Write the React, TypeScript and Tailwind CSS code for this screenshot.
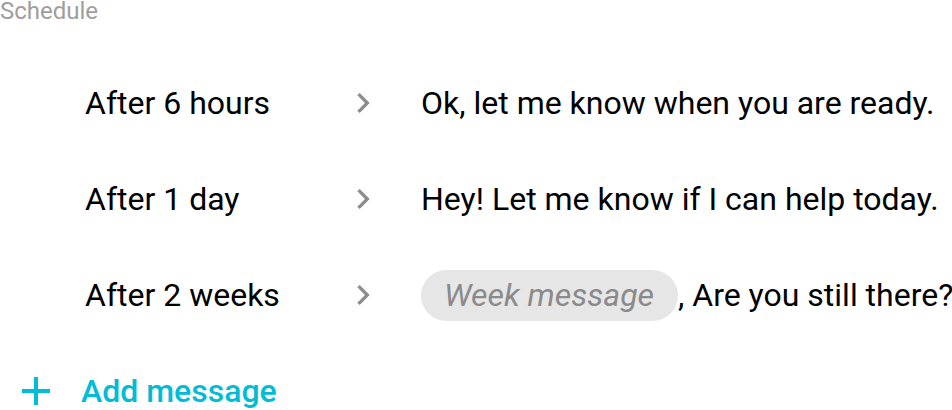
const rows = [
  { when: "After 6 hours", text: "Ok, let me know when you are ready." },
  { when: "After 1 day", text: "Hey! Let me know if I can help today." },
  { when: "After 2 weeks", chip: "Week message", text: ", Are you still there?" },
];

const Chevron = () => (
  <svg viewBox="0 0 24 24" className="w-10 h-10 shrink-0 fill-[#8c8c8c]">
    <path d="M10 6L8.59 7.41 13.17 12l-4.58 4.59L10 18l6-6z" />
  </svg>
);

const Plus = () => (
  <svg viewBox="0 0 24 24" className="w-12 h-12 shrink-0 fill-[#00bcd4]">
    <path d="M19 13h-6v6h-2v-6H5v-2h6V5h2v6h6v2z" />
  </svg>
);

export default function App() {
  return (
    <div className="w-[952px] h-[410px] overflow-hidden bg-white font-['Roboto',sans-serif]">
      <div className="text-[24px] leading-[22px] text-[#9e9e9e]">Schedule</div>
      <div className="mt-[33px]">
        {rows.map((r) => (
          <div key={r.when} className="h-24 flex items-center whitespace-nowrap text-[32px] text-black">
            <div className="ml-[85px] w-[258px] shrink-0">{r.when}</div>
            <Chevron />
            <div className="ml-[38px] flex items-center">
              {r.chip && (
                <span className="h-[51px] pl-[23px] pr-[24px] rounded-full bg-[#e6e6e6] text-[#8a8a8a] italic flex items-center">
                  {r.chip}
                </span>
              )}
              <span>{r.text}</span>
            </div>
          </div>
        ))}
        <div className="h-24 flex items-center">
          <div className="ml-3">
            <Plus />
          </div>
          <div className="ml-[21px] text-[32px] font-medium text-[#00bcd4]">Add message</div>
        </div>
      </div>
    </div>
  );
}
